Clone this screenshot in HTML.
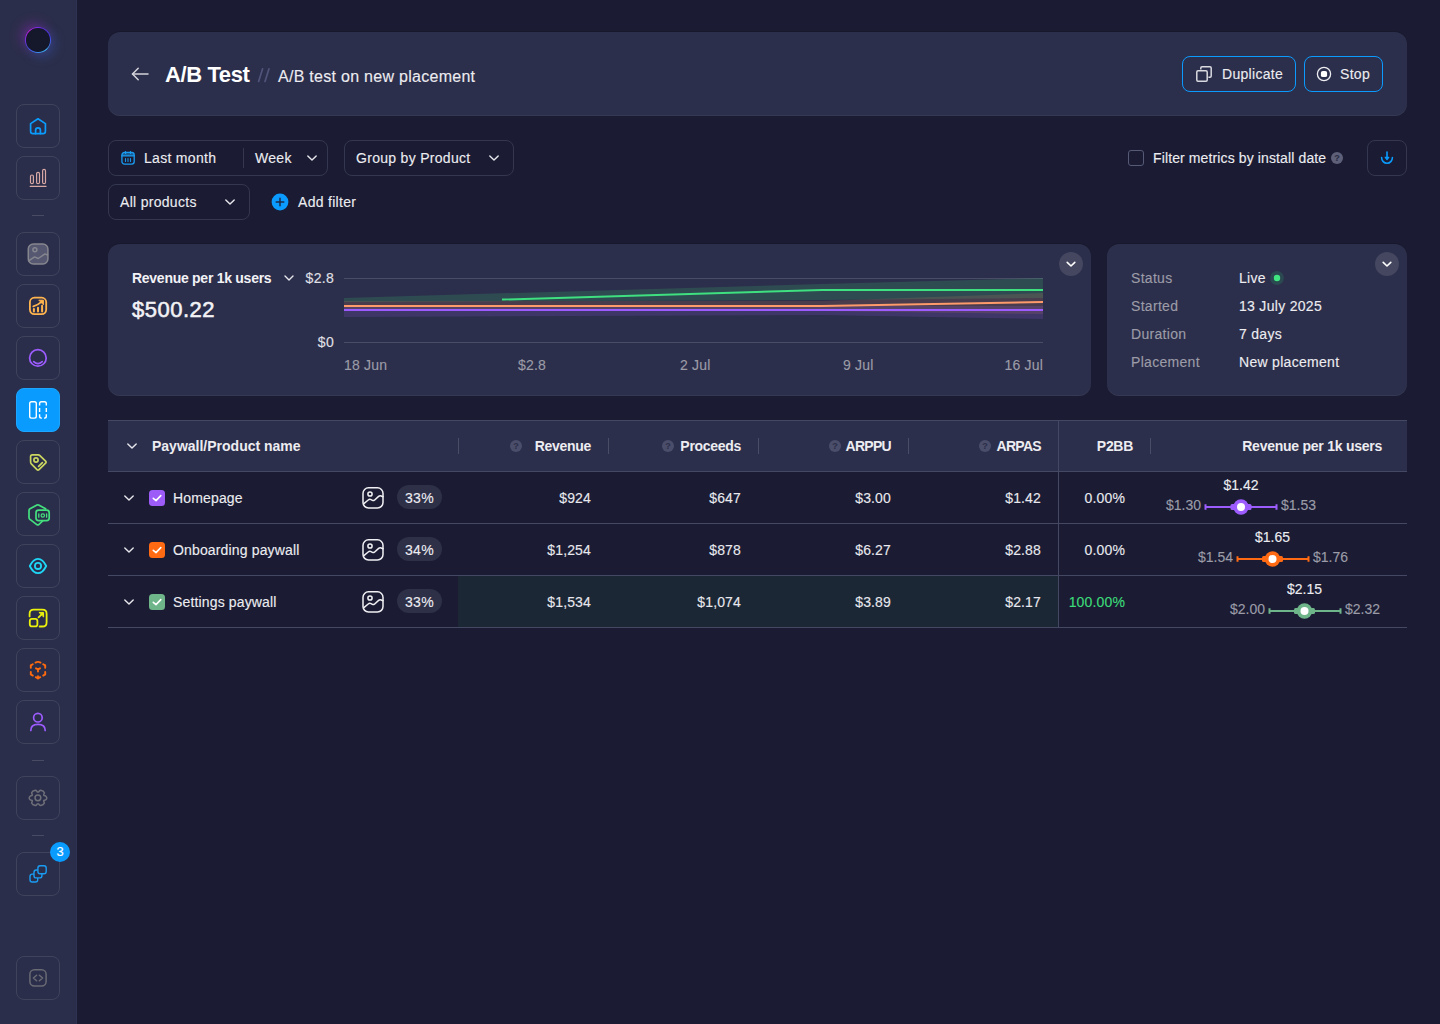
<!DOCTYPE html>
<html><head><meta charset="utf-8">
<style>
*{box-sizing:border-box;margin:0;padding:0}
html,body{width:1440px;height:1024px;overflow:hidden;background:#1b1c33;font-family:"Liberation Sans",sans-serif;color:#ececf1}
body div{-webkit-text-stroke:0.12px currentColor}
.hd,.b{-webkit-text-stroke:0 !important}
.abs{position:absolute}
#sb{position:absolute;left:0;top:0;width:77px;height:1024px;background:#2b2e4a;border-right:1px solid #2e3252}
.sbb{position:absolute;left:16px;width:44px;height:44px;border:1px solid #40435c;border-radius:8px}
.sbb svg{position:absolute;left:11px;top:11px;width:20px;height:20px}
.sep{position:absolute;left:32px;width:12px;height:1px;background:#484b63}
.card{position:absolute;background:#2c2f4b;border-radius:12px;box-shadow:inset 0 -1px 0 rgba(255,255,255,0.05),0 -1px 0 rgba(0,0,0,0.12)}
.t14{font-size:14px;line-height:16px;white-space:nowrap;letter-spacing:0.3px}
.box{position:absolute;border:1px solid #34374f;border-radius:8px;height:36px}
.btn{position:absolute;border:1px solid #0b9bff;border-radius:8px;height:36px}
.gray{color:#9c9ca8}
.hd{position:absolute;font-weight:bold;font-size:14px;line-height:16px;white-space:nowrap;letter-spacing:-0.3px}
.cell{position:absolute;font-size:14px;line-height:16px;white-space:nowrap}
.hline{position:absolute;left:108px;width:1299px;height:1px;background:#454862}
.vdiv{position:absolute;top:438px;width:1px;height:16px;background:#4a4d66}
.help{position:absolute;width:12px;height:12px;border-radius:50%;background:#4b4e6a}
</style></head>
<body>
<div id="sb">
<div class="abs" style="left:25px;top:27px;width:26px;height:26px;border-radius:50%;box-shadow:-4px -4px 12px rgba(170,40,210,0.35),4px 4px 12px rgba(60,110,230,0.3)"></div><div class="abs" style="left:25px;top:27px;width:26px;height:26px;border-radius:50%;background:conic-gradient(#7a2cf0 0deg,#4a3cf0 70deg,#3f6ff2 110deg,#42b8f6 140deg,#3a86f0 185deg,#4a4cec 230deg,#7a30e6 270deg,#d01ee8 315deg,#7a2cf0 360deg);"></div><div class="abs" style="left:26.4px;top:28.4px;width:23.2px;height:23.2px;border-radius:50%;background:#15172a"></div><div class="sbb" style="top:104px"></div><svg class="abs" style="left:24px;top:112px" width="28" height="28" viewBox="0 0 28 28"><g fill="none" stroke-linecap="round" stroke-linejoin="round" stroke="#0a9cff" stroke-width="1.7"><path d="M6.6 11.6 L14 6.8 L21.4 11.6 V19.2 Q21.4 21.6 19 21.6 H9 Q6.6 21.6 6.6 19.2 Z"/><path d="M11.6 21.6 V18.2 A2.4 2.4 0 0 1 16.4 18.2 V21.6"/></g></svg><div class="sbb" style="top:156px"></div><svg class="abs" style="left:24px;top:164px" width="28" height="28" viewBox="0 0 28 28"><g fill="none" stroke-linecap="round" stroke-linejoin="round" stroke="#d8a8a4" stroke-width="1.2"><rect x="6.5" y="11" width="2.9" height="8.6" rx="1.45"/><rect x="12.6" y="8.3" width="2.9" height="11.3" rx="1.45"/><rect x="18.6" y="5.4" width="2.9" height="14.2" rx="1.45"/><path d="M6.2 22.4 H22"/></g></svg><div class="sbb" style="top:232px"></div><svg class="abs" style="left:24px;top:240px" width="28" height="28" viewBox="0 0 28 28"><g fill="none" stroke-linecap="round" stroke-linejoin="round" stroke="#86868f" stroke-width="1.5"><rect x="4.3" y="4.1" width="19.6" height="19.8" rx="5" fill="#555870"/><circle cx="10.9" cy="9.8" r="2"/><path d="M4.6 20.8 L10.6 16.9 L14.2 18.5 L21 13.9 L23.6 15"/></g></svg><div class="sbb" style="top:284px"></div><svg class="abs" style="left:24px;top:292px" width="28" height="28" viewBox="0 0 28 28"><g fill="none" stroke-linecap="round" stroke-linejoin="round" stroke="#ffb44e" stroke-width="1.8"><rect x="5.9" y="5.7" width="16.3" height="16.4" rx="4.5"/><path d="M9.9 17 V19.4 M14 15.7 V19.4 M18.1 13.8 V19.4" stroke-width="2"/><path d="M9.3 14.4 Q14 13 18.2 9.4"/><path d="M15.2 8.2 H19.4 V12.4 Z" fill="#ffb44e" stroke-width="1"/></g></svg><div class="sbb" style="top:336px"></div><svg class="abs" style="left:24px;top:344px" width="28" height="28" viewBox="0 0 28 28"><g fill="none" stroke-linecap="round" stroke-linejoin="round" stroke="#9c5cff" stroke-width="1.7"><circle cx="13.9" cy="13.9" r="8.3"/><path d="M9.7 17.6 Q14 21.5 18.2 17.6"/></g></svg><div class="sbb" style="top:388px;background:#0a9bff;border-color:#1ea6ff"></div><svg class="abs" style="left:24px;top:396px" width="28" height="28" viewBox="0 0 28 28"><g fill="none" stroke-linecap="round" stroke-linejoin="round" stroke="#ffffff" stroke-width="1.4"><rect x="5.7" y="5.7" width="6.6" height="16.4" rx="1.8"/><path d="M15.6 9.6 V7.5 Q15.6 5.7 17.4 5.7 H20.5 Q22.3 5.7 22.3 7.5 V9.6 M15.6 11.9 V15.9 M22.3 11.9 V15.9 M15.6 18.2 V20.3 Q15.6 22.1 17.4 22.1 H17.9 M20 22.1 H20.5 Q22.3 22.1 22.3 20.3 V18.2" stroke-linecap="butt"/></g></svg><div class="sbb" style="top:440px"></div><svg class="abs" style="left:24px;top:448px" width="28" height="28" viewBox="0 0 28 28"><g fill="none" stroke-linecap="round" stroke-linejoin="round" stroke="#cad660" stroke-width="1.7"><path d="M6.6 13.8 V8.6 Q6.6 6.9 8.3 6.9 H14.2 Q15.2 6.9 15.9 7.6 L21.6 13.2 Q22.6 14.2 21.6 15.2 L15 21.6 Q14 22.6 13 21.6 L7.3 15.9 Q6.6 15.2 6.6 13.8 Z"/><circle cx="12" cy="12" r="2.1"/><path d="M14.6 18.4 L18.4 14.6"/></g></svg><div class="sbb" style="top:492px"></div><svg class="abs" style="left:24px;top:500px" width="28" height="28" viewBox="0 0 28 28"><g fill="none" stroke-linecap="round" stroke-linejoin="round" stroke="#44e07f" stroke-width="1.7"><path d="M21.6 8.8 L14.6 5 Q13.8 4.6 13 5 L6 8.8 Q5 9.4 5 10.6 V17.6 Q5 18.8 6 19.4 L12.8 24.6 Q13.8 25.3 14.8 24.6 L18.6 21"/><rect x="12" y="10.2" width="13.2" height="10.4" rx="2.6" fill="#2b2e4a"/><path d="M14.8 14 V17.2 M22.6 14 V17.2" stroke-width="1.3"/><circle cx="18.8" cy="15.5" r="1.7" stroke-width="1.2"/></g></svg><div class="sbb" style="top:544px"></div><svg class="abs" style="left:24px;top:552px" width="28" height="28" viewBox="0 0 28 28"><g fill="none" stroke-linecap="round" stroke-linejoin="round" stroke="#1ed7f7" stroke-width="1.8"><path d="M5.8 14 C8.2 9, 11 6.9, 14 6.9 C17 6.9, 19.8 9, 22.2 14 C19.8 19, 17 21.2, 14 21.2 C11 21.2, 8.2 19, 5.8 14 Z"/><circle cx="14" cy="13.9" r="3.1"/></g></svg><div class="sbb" style="top:596px"></div><svg class="abs" style="left:24px;top:604px" width="28" height="28" viewBox="0 0 28 28"><g fill="none" stroke-linecap="round" stroke-linejoin="round" stroke="#eaf20c" stroke-width="1.8"><path d="M5.6 12.4 V9.8 Q5.6 5.7 9.7 5.7 H18.4 Q22.6 5.7 22.6 9.8 V18.4 Q22.6 22.5 18.4 22.5 H15.6"/><rect x="5.8" y="14.8" width="7.6" height="7.6" rx="2.2"/><path d="M14.6 13.4 L18.4 9.6"/><path d="M15.3 8.4 H19.6 V12.6 Z" fill="#eaf20c" stroke-width="1"/></g></svg><div class="sbb" style="top:648px"></div><svg class="abs" style="left:24px;top:656px" width="28" height="28" viewBox="0 0 28 28"><g fill="none" stroke-linecap="round" stroke-linejoin="round" stroke="#ff6a0e" stroke-width="1.9"><path d="M11.5 6.6 Q14 5.2 16.5 6.6"/><path d="M8.8 8.2 L6.8 9.4 V11.8"/><path d="M19.2 8.2 L21.2 9.4 V11.8"/><path d="M6.8 16 V18.4 L8.8 19.6"/><path d="M21.2 16 V18.4 L19.2 19.6"/><path d="M11.8 21.2 L14 22.4 L16.2 21.2"/><path d="M14 22.4 V20.2"/><path d="M12 12.3 L14 13.4 L16 12.3 M14 13.4 V15.6"/></g></svg><div class="sbb" style="top:700px"></div><svg class="abs" style="left:24px;top:708px" width="28" height="28" viewBox="0 0 28 28"><g fill="none" stroke-linecap="round" stroke-linejoin="round" stroke="#9c5cff" stroke-width="1.7"><circle cx="13.9" cy="9.7" r="4.3"/><path d="M6.8 22.4 Q6.8 16.4 14 16.4 Q21.2 16.4 21.2 22.4"/></g></svg><div class="sbb" style="top:776px"></div><svg class="abs" style="left:24px;top:784px" width="28" height="28" viewBox="0 0 28 28"><g fill="none" stroke-linecap="round" stroke-linejoin="round" stroke="#6e6f79" stroke-width="1.5"><path d="M11.3 6.2 Q12.6 6.4 13 7.6 Q14 8.6 15 7.6 Q15.4 6.4 16.7 6.2 Q19.6 6.8 20.4 8.8 Q19.8 10.6 19.6 11 Q20 12 21.4 11.8 Q22.8 12.6 22.8 13.9 Q22.8 15.3 21.4 16 Q20 16 19.6 16.8 Q19.8 17.6 20.4 19 Q19.6 21 16.7 21.6 Q15.4 21.4 15 20.2 Q14 19.2 13 20.2 Q12.6 21.4 11.3 21.6 Q8.4 21 7.6 19 Q8.2 17.6 8.4 16.8 Q8 16 6.6 16 Q5.2 15.3 5.2 13.9 Q5.2 12.6 6.6 11.8 Q8 12 8.4 11 Q8.2 10.6 7.6 8.8 Q8.4 6.8 11.3 6.2 Z"/><circle cx="13.9" cy="13.8" r="2.9"/></g></svg><div class="sbb" style="top:852px"></div><svg class="abs" style="left:24px;top:860px" width="28" height="28" viewBox="0 0 28 28"><g fill="none" stroke-linecap="round" stroke-linejoin="round" stroke="#1a9cf2" stroke-width="1.4"><rect x="6" y="14.1" width="7.7" height="7.9" rx="2.2" fill="#2b2e4a"/><rect x="10" y="10" width="7.9" height="7.9" rx="2.2" fill="#2b2e4a"/><rect x="13.9" y="5.7" width="8.3" height="8" rx="2.2" fill="#2b2e4a"/></g></svg><div class="sbb" style="top:956px"></div><svg class="abs" style="left:24px;top:964px" width="28" height="28" viewBox="0 0 28 28"><g fill="none" stroke-linecap="round" stroke-linejoin="round" stroke="#696a74" stroke-width="1.5"><rect x="5.9" y="5.7" width="16.2" height="16.4" rx="4.5"/><path d="M12.6 11.2 L9.4 14 L12.6 16.7 M15.4 11.2 L18.6 14 L15.4 16.7"/></g></svg><div class="sep" style="top:215px"></div><div class="sep" style="top:760px"></div><div class="sep" style="top:835px"></div><div class="abs" style="left:50px;top:842px;width:20px;height:20px;border-radius:50%;background:#0a9bff;color:#fff;font-size:13px;line-height:20px;text-align:center">3</div>
</div>

<!-- header card -->
<div class="card" style="left:108px;top:32px;width:1299px;height:84px"></div>


<!-- header content -->
<svg class="abs" style="left:130px;top:66px" width="20" height="16" viewBox="0 0 20 16"><g fill="none" stroke="#d4d4dc" stroke-width="1.5" stroke-linecap="round" stroke-linejoin="round"><path d="M2.5 8 H18"/><path d="M8.2 2.3 L2.5 8 L8.2 13.7"/></g></svg>
<div class="abs" style="left:165px;top:63px;font-size:22px;line-height:24px;font-weight:bold;color:#fff;white-space:nowrap;letter-spacing:-0.4px;-webkit-text-stroke:0">A/B Test</div>
<svg class="abs" style="left:254px;top:64px" width="20" height="22" viewBox="254 64 20 22"><path d="M258.6 81.4 L262.6 68.8 M265 81.4 L269 68.8" stroke="#50547a" stroke-width="1.7" stroke-linecap="round"/></svg>
<div class="abs" style="left:278px;top:68px;font-size:16px;line-height:18px;letter-spacing:0.28px;color:#ececf1;white-space:nowrap">A/B test on new placement</div>
<div class="btn" style="left:1182px;top:56px;width:114px"></div>
<svg class="abs" style="left:1194px;top:64px" width="20" height="20" viewBox="0 0 20 20"><g fill="none" stroke="#d9d9e0" stroke-width="1.5" stroke-linejoin="round"><path d="M6.8 5.6 V4 Q6.8 2.8 8 2.8 H16 Q17.2 2.8 17.2 4 V12 Q17.2 13.2 16 13.2 H14.4"/><rect x="2.8" y="6.8" width="10.4" height="10.4" rx="1.2"/></g></svg>
<div class="t14 abs" style="left:1222px;top:66px;color:#ececf1">Duplicate</div>
<div class="btn" style="left:1304px;top:56px;width:79px"></div>
<svg class="abs" style="left:1314px;top:64px" width="20" height="20" viewBox="0 0 20 20"><circle cx="10" cy="10" r="6.6" fill="none" stroke="#ececf1" stroke-width="1.3"/><rect x="6.9" y="6.9" width="6.2" height="6.2" rx="1.9" fill="#fff"/></svg>
<div class="t14 abs" style="left:1340px;top:66px;color:#ececf1">Stop</div>

<!-- filters -->
<div class="box" style="left:108px;top:140px;width:220px"></div>
<div class="box" style="left:344px;top:140px;width:170px"></div>
<div class="box" style="left:108px;top:184px;width:142px"></div>
<div class="box" style="left:1367px;top:140px;width:40px"></div>
<svg class="abs" style="left:120px;top:150px" width="16" height="16" viewBox="0 0 16 16"><path d="M1.9 5.8 V5 Q1.9 2.4 4.5 2.4 H11.6 Q14.2 2.4 14.2 5 V5.8 Z" fill="#1a93e6" fill-opacity="0.55"/><g fill="none" stroke="#1a9cf2" stroke-width="1.3" stroke-linecap="round"><rect x="1.9" y="2.4" width="12.3" height="11.7" rx="2.6"/><path d="M1.9 5.8 H14.2"/><path d="M5.5 1.7 V3.4 M10.5 1.7 V3.4"/></g><g stroke="#1a93e6" stroke-width="1.1" stroke-linecap="round"><path d="M5.5 8.6 V11.4 M8 8.6 V11.4 M10.5 8.6 V11.4"/></g></svg>
<div class="t14 abs" style="left:144px;top:150px">Last month</div>
<div class="abs" style="left:243px;top:148px;width:1px;height:20px;background:#34374f"></div>
<div class="t14 abs" style="left:255px;top:150px">Week</div>
<svg class="abs" style="left:305px;top:151px" width="14" height="14" viewBox="0 0 14 14"><path d="M2.8 4.9 L7 9.1 L11.2 4.9" fill="none" stroke="#e6e6ec" stroke-width="1.4" stroke-linecap="round" stroke-linejoin="round"/></svg>
<div class="t14 abs" style="left:356px;top:150px">Group by Product</div>
<svg class="abs" style="left:487px;top:151px" width="14" height="14" viewBox="0 0 14 14"><path d="M2.8 4.9 L7 9.1 L11.2 4.9" fill="none" stroke="#e6e6ec" stroke-width="1.4" stroke-linecap="round" stroke-linejoin="round"/></svg>
<div class="t14 abs" style="left:120px;top:194px">All products</div>
<svg class="abs" style="left:223px;top:195px" width="14" height="14" viewBox="0 0 14 14"><path d="M2.8 4.9 L7 9.1 L11.2 4.9" fill="none" stroke="#e6e6ec" stroke-width="1.4" stroke-linecap="round" stroke-linejoin="round"/></svg>
<svg class="abs" style="left:271px;top:193px" width="18" height="18" viewBox="0 0 18 18"><circle cx="9" cy="9" r="8.4" fill="#0b9bff"/><path d="M9 5.2 V12.8 M5.2 9 H12.8" stroke="#1b2a4a" stroke-width="1.5" stroke-linecap="round"/></svg>
<div class="t14 abs" style="left:298px;top:194px">Add filter</div>
<div class="abs" style="left:1128px;top:150px;width:16px;height:16px;border:1px solid #565a76;border-radius:3px"></div>
<div class="t14 abs" style="left:1153px;top:150px;letter-spacing:0.12px">Filter metrics by install date</div>
<div class="help" style="left:1331px;top:152px;background:#5d6078"></div>
<div class="abs" style="left:1331px;top:152px;width:12px;height:12px;font-size:9px;line-height:12px;font-weight:bold;text-align:center;color:#2a2c44">?</div>
<svg class="abs" style="left:1379px;top:150px" width="16" height="16" viewBox="0 0 16 16"><g fill="none" stroke="#0a9cff" stroke-width="1.6" stroke-linecap="round" stroke-linejoin="round"><path d="M8 2.1 V7.6"/><path d="M6.2 7.3 L9.8 7.3 L8 9.6 Z" fill="#0a9cff" stroke-width="1.2"/><path d="M2.6 7.6 A5.4 5.7 0 0 0 13.4 7.6"/></g></svg>


<!-- chart card -->
<div class="card" style="left:108px;top:244px;width:983px;height:152px"></div>
<div class="card" style="left:1107px;top:244px;width:300px;height:152px"></div>


<!-- chart content -->
<div class="abs" style="left:132px;top:270px;font-size:14px;line-height:16px;font-weight:bold;color:#f2f2f6;white-space:nowrap;letter-spacing:-0.27px;-webkit-text-stroke:0">Revenue per 1k users</div>
<svg class="abs" style="left:282px;top:271px" width="14" height="14" viewBox="0 0 14 14"><path d="M3 5 L7 9 L11 5" fill="none" stroke="#e6e6ec" stroke-width="1.4" stroke-linecap="round" stroke-linejoin="round"/></svg>
<div class="abs" style="left:132px;top:297px;font-size:22px;line-height:24px;font-weight:normal;color:#f2f2f6;white-space:nowrap;letter-spacing:0.5px;padding-top:1px;-webkit-text-stroke:0.55px #f2f2f6">$500.22</div>
<div class="t14 abs" style="left:300px;width:34px;text-align:right;top:270px;color:#e0e0e8">$2.8</div>
<div class="t14 abs" style="left:300px;width:34px;text-align:right;top:334px;color:#e0e0e8">$0</div>
<div class="abs" style="left:344px;top:278px;width:699px;height:1px;background:#4a4d66"></div>
<div class="abs" style="left:344px;top:342px;width:699px;height:1px;background:#4a4d66"></div>
<svg class="abs" style="left:344px;top:270px" width="700" height="60" viewBox="344 270 700 60">
  <path d="M343 298 L822 284 L1043 278 L1043 298 L822 300 L343 302 Z" fill="#3fe07f" fill-opacity="0.16"/>
  <path d="M344 301 L822 301 L1043 293 L1043 314 L822 311 L344 311 Z" fill="#ff8c5a" fill-opacity="0.14"/>
  <path d="M344 305 L822 306 L1043 306 L1043 319 L822 315 L344 317 Z" fill="#9c5cff" fill-opacity="0.16"/>
  <path d="M502 299.6 L822 290 L1043 290" fill="none" stroke="#3fe07f" stroke-width="2"/>
  <path d="M343 306 L822 306 L1043 302" fill="none" stroke="#ff9a6a" stroke-width="2"/>
  <path d="M343 310 L1043 310" fill="none" stroke="#9c5cff" stroke-width="2"/>
</svg>
<div class="abs" style="left:344px;top:357px;font-size:14px;line-height:16px;color:#9c9ca8;white-space:nowrap;letter-spacing:0.2px">18 Jun</div>
<div class="abs" style="left:518px;top:357px;font-size:14px;line-height:16px;color:#9c9ca8;white-space:nowrap;letter-spacing:0.2px">$2.8</div>
<div class="abs" style="left:680px;top:357px;font-size:14px;line-height:16px;color:#9c9ca8;white-space:nowrap;letter-spacing:0.2px">2 Jul</div>
<div class="abs" style="left:843px;top:357px;font-size:14px;line-height:16px;color:#9c9ca8;white-space:nowrap;letter-spacing:0.2px">9 Jul</div>
<div class="abs" style="left:943px;width:100px;text-align:right;top:357px;font-size:14px;line-height:16px;color:#9c9ca8;white-space:nowrap;letter-spacing:0.2px">16 Jul</div>
<div class="abs" style="left:1059px;top:252px;width:24px;height:24px;border-radius:50%;background:#44475f"></div>
<svg class="abs" style="left:1064px;top:257px" width="14" height="14" viewBox="0 0 14 14"><path d="M3.2 5.4 L7 9 L10.8 5.4" fill="none" stroke="#fff" stroke-width="1.6" stroke-linecap="round" stroke-linejoin="round"/></svg>

<!-- status content -->
<div class="t14 abs gray" style="left:1131px;top:270px">Status</div>
<div class="t14 abs gray" style="left:1131px;top:298px">Started</div>
<div class="t14 abs gray" style="left:1131px;top:326px">Duration</div>
<div class="t14 abs gray" style="left:1131px;top:354px">Placement</div>
<div class="t14 abs" style="left:1239px;top:270px">Live</div>
<svg class="abs" style="left:1270px;top:271px" width="14" height="14" viewBox="0 0 14 14"><circle cx="7" cy="7" r="6.9" fill="#2b4950"/><circle cx="7" cy="7" r="3.2" fill="#40e680"/></svg>
<div class="t14 abs" style="left:1239px;top:298px">13 July 2025</div>
<div class="t14 abs" style="left:1239px;top:326px">7 days</div>
<div class="t14 abs" style="left:1239px;top:354px">New placement</div>
<div class="abs" style="left:1375px;top:252px;width:24px;height:24px;border-radius:50%;background:#44475f"></div>
<svg class="abs" style="left:1380px;top:257px" width="14" height="14" viewBox="0 0 14 14"><path d="M3.2 5.4 L7 9 L10.8 5.4" fill="none" stroke="#fff" stroke-width="1.6" stroke-linecap="round" stroke-linejoin="round"/></svg>

<!-- table -->
<div class="abs" style="left:108px;top:420px;width:1299px;height:51px;background:#2c2f4b"></div>
<div class="abs" style="left:458px;top:576px;width:600px;height:51px;background:#1c2736"></div>
<div class="hline" style="top:420px"></div>
<div class="hline" style="top:471px"></div>
<div class="hline" style="top:523px"></div>
<div class="hline" style="top:575px"></div>
<div class="hline" style="top:627px"></div>
<div class="abs" style="left:1058px;top:420px;width:1px;height:208px;background:#454862"></div>
<div class="vdiv" style="left:458px"></div>
<div class="vdiv" style="left:608px"></div>
<div class="vdiv" style="left:758px"></div>
<div class="vdiv" style="left:908px"></div>
<div class="vdiv" style="left:1150px"></div>
<svg class="abs" style="left:125px;top:439px" width="14" height="14" viewBox="0 0 14 14"><path d="M2.8 4.9 L7 9.1 L11.2 4.9" fill="none" stroke="#e6e6ec" stroke-width="1.4" stroke-linecap="round" stroke-linejoin="round"/></svg>
<div class="hd" style="left:152px;top:438px;letter-spacing:0px">Paywall/Product name</div>
<div class="hd" style="left:441px;width:150px;text-align:right;top:438px;letter-spacing:-0.3px">Revenue</div>
<div class="help" style="left:510px;top:440px"></div><div class="abs" style="left:510px;top:440px;width:12px;height:12px;font-size:9px;line-height:12px;font-weight:bold;text-align:center;color:#2c2f4b">?</div>
<div class="hd" style="left:591px;width:150px;text-align:right;top:438px;letter-spacing:-0.3px">Proceeds</div>
<div class="help" style="left:662px;top:440px"></div><div class="abs" style="left:662px;top:440px;width:12px;height:12px;font-size:9px;line-height:12px;font-weight:bold;text-align:center;color:#2c2f4b">?</div>
<div class="hd" style="left:741px;width:150px;text-align:right;top:438px;letter-spacing:-0.7px">ARPPU</div>
<div class="help" style="left:829px;top:440px"></div><div class="abs" style="left:829px;top:440px;width:12px;height:12px;font-size:9px;line-height:12px;font-weight:bold;text-align:center;color:#2c2f4b">?</div>
<div class="hd" style="left:891px;width:150px;text-align:right;top:438px;letter-spacing:-0.7px">ARPAS</div>
<div class="help" style="left:979px;top:440px"></div><div class="abs" style="left:979px;top:440px;width:12px;height:12px;font-size:9px;line-height:12px;font-weight:bold;text-align:center;color:#2c2f4b">?</div>
<div class="hd" style="left:983px;width:150px;text-align:right;top:438px">P2BB</div>
<div class="hd" style="left:1232px;width:150px;text-align:right;top:438px;letter-spacing:-0.25px">Revenue per 1k users</div>
<svg class="abs" style="left:121.5px;top:491px" width="14" height="14" viewBox="0 0 14 14"><path d="M2.8 4.9 L7 9.1 L11.2 4.9" fill="none" stroke="#e6e6ec" stroke-width="1.4" stroke-linecap="round" stroke-linejoin="round"/></svg>
<div class="abs" style="left:149px;top:490px;width:16px;height:16px;border-radius:3.5px;background:#9d5cf8"></div>
<svg class="abs" style="left:149px;top:490px" width="16" height="16" viewBox="0 0 16 16"><path d="M4.3 8.3 L7 10.6 L11.8 5.6" fill="none" stroke="#fff" stroke-width="1.6" stroke-linecap="round" stroke-linejoin="round"/></svg>
<div class="cell" style="left:173px;top:490px;letter-spacing:0.15px">Homepage</div>
<svg class="abs" style="left:361px;top:485px" width="24" height="24" viewBox="0 0 24 24"><g fill="none" stroke="#f0f0f4" stroke-width="1.5" stroke-linecap="round" stroke-linejoin="round"><rect x="2" y="2.8" width="20" height="20.2" rx="5.5"/><circle cx="9" cy="9" r="2.1"/><path d="M2.6 18.8 L7.2 15 Q8.6 13.9 10 14.6 L11.4 15.4 Q12.4 15.9 13.4 15.2 L17.6 11.4 Q18.8 10.4 20.2 11 L22 11.8"/></g></svg>
<div class="abs" style="left:397px;top:485px;width:45px;height:24px;border-radius:12px;background:#2e3048"></div>
<div class="cell" style="left:397px;width:45px;text-align:center;top:490px;letter-spacing:0.3px">33%</div>
<div class="cell" style="left:441px;width:150px;text-align:right;top:490px;color:#e8e8ee;letter-spacing:0.15px">$924</div>
<div class="cell" style="left:591px;width:150px;text-align:right;top:490px;color:#e8e8ee;letter-spacing:0.15px">$647</div>
<div class="cell" style="left:741px;width:150px;text-align:right;top:490px;color:#e8e8ee;letter-spacing:0.15px">$3.00</div>
<div class="cell" style="left:891px;width:150px;text-align:right;top:490px;color:#e8e8ee;letter-spacing:0.15px">$1.42</div>
<div class="cell" style="left:975px;width:150px;text-align:right;top:490px;color:#e8e8ee;letter-spacing:0.15px">0.00%</div>
<svg class="abs" style="left:121.5px;top:543px" width="14" height="14" viewBox="0 0 14 14"><path d="M2.8 4.9 L7 9.1 L11.2 4.9" fill="none" stroke="#e6e6ec" stroke-width="1.4" stroke-linecap="round" stroke-linejoin="round"/></svg>
<div class="abs" style="left:149px;top:542px;width:16px;height:16px;border-radius:3.5px;background:#ff6a13"></div>
<svg class="abs" style="left:149px;top:542px" width="16" height="16" viewBox="0 0 16 16"><path d="M4.3 8.3 L7 10.6 L11.8 5.6" fill="none" stroke="#fff" stroke-width="1.6" stroke-linecap="round" stroke-linejoin="round"/></svg>
<div class="cell" style="left:173px;top:542px;letter-spacing:0.15px">Onboarding paywall</div>
<svg class="abs" style="left:361px;top:537px" width="24" height="24" viewBox="0 0 24 24"><g fill="none" stroke="#f0f0f4" stroke-width="1.5" stroke-linecap="round" stroke-linejoin="round"><rect x="2" y="2.8" width="20" height="20.2" rx="5.5"/><circle cx="9" cy="9" r="2.1"/><path d="M2.6 18.8 L7.2 15 Q8.6 13.9 10 14.6 L11.4 15.4 Q12.4 15.9 13.4 15.2 L17.6 11.4 Q18.8 10.4 20.2 11 L22 11.8"/></g></svg>
<div class="abs" style="left:397px;top:537px;width:45px;height:24px;border-radius:12px;background:#2e3048"></div>
<div class="cell" style="left:397px;width:45px;text-align:center;top:542px;letter-spacing:0.3px">34%</div>
<div class="cell" style="left:441px;width:150px;text-align:right;top:542px;color:#e8e8ee;letter-spacing:0.15px">$1,254</div>
<div class="cell" style="left:591px;width:150px;text-align:right;top:542px;color:#e8e8ee;letter-spacing:0.15px">$878</div>
<div class="cell" style="left:741px;width:150px;text-align:right;top:542px;color:#e8e8ee;letter-spacing:0.15px">$6.27</div>
<div class="cell" style="left:891px;width:150px;text-align:right;top:542px;color:#e8e8ee;letter-spacing:0.15px">$2.88</div>
<div class="cell" style="left:975px;width:150px;text-align:right;top:542px;color:#e8e8ee;letter-spacing:0.15px">0.00%</div>
<svg class="abs" style="left:121.5px;top:595px" width="14" height="14" viewBox="0 0 14 14"><path d="M2.8 4.9 L7 9.1 L11.2 4.9" fill="none" stroke="#e6e6ec" stroke-width="1.4" stroke-linecap="round" stroke-linejoin="round"/></svg>
<div class="abs" style="left:149px;top:594px;width:16px;height:16px;border-radius:3.5px;background:#6fb58a"></div>
<svg class="abs" style="left:149px;top:594px" width="16" height="16" viewBox="0 0 16 16"><path d="M4.3 8.3 L7 10.6 L11.8 5.6" fill="none" stroke="#fff" stroke-width="1.6" stroke-linecap="round" stroke-linejoin="round"/></svg>
<div class="cell" style="left:173px;top:594px;letter-spacing:0.15px">Settings paywall</div>
<svg class="abs" style="left:361px;top:589px" width="24" height="24" viewBox="0 0 24 24"><g fill="none" stroke="#f0f0f4" stroke-width="1.5" stroke-linecap="round" stroke-linejoin="round"><rect x="2" y="2.8" width="20" height="20.2" rx="5.5"/><circle cx="9" cy="9" r="2.1"/><path d="M2.6 18.8 L7.2 15 Q8.6 13.9 10 14.6 L11.4 15.4 Q12.4 15.9 13.4 15.2 L17.6 11.4 Q18.8 10.4 20.2 11 L22 11.8"/></g></svg>
<div class="abs" style="left:397px;top:589px;width:45px;height:24px;border-radius:12px;background:#2e3048"></div>
<div class="cell" style="left:397px;width:45px;text-align:center;top:594px;letter-spacing:0.3px">33%</div>
<div class="cell" style="left:441px;width:150px;text-align:right;top:594px;color:#e8e8ee;letter-spacing:0.15px">$1,534</div>
<div class="cell" style="left:591px;width:150px;text-align:right;top:594px;color:#e8e8ee;letter-spacing:0.15px">$1,074</div>
<div class="cell" style="left:741px;width:150px;text-align:right;top:594px;color:#e8e8ee;letter-spacing:0.15px">$3.89</div>
<div class="cell" style="left:891px;width:150px;text-align:right;top:594px;color:#e8e8ee;letter-spacing:0.15px">$2.17</div>
<div class="cell" style="left:975px;width:150px;text-align:right;top:594px;color:#3ddc7a;letter-spacing:0.15px">100.00%</div>
<div class="abs" style="left:1201px;width:80px;text-align:center;top:477px;font-size:14px;line-height:16px;color:#ececf1;white-space:nowrap">$1.42</div><div class="abs" style="left:1121px;width:80px;text-align:right;top:497px;font-size:14px;line-height:16px;color:#9c9ca8;white-space:nowrap">$1.30</div><div class="abs" style="left:1281px;top:497px;font-size:14px;line-height:16px;color:#9c9ca8;white-space:nowrap">$1.53</div><svg class="abs" style="left:1203px;top:498px" width="76" height="18" viewBox="1203 498 76 18"><path d="M1205 507 H1277" stroke="#9c5cff" stroke-width="2.2"/><path d="M1205.5 504.2 V509.8 M1276.5 504.2 V509.8" stroke="#9c5cff" stroke-width="2"/><rect x="1230.5" y="504" width="21" height="6" rx="1.5" fill="#9c5cff"/><circle cx="1241" cy="507" r="7.7" fill="#9c5cff"/><circle cx="1241" cy="507" r="4" fill="#fff"/></svg>
<div class="abs" style="left:1232.5px;width:80px;text-align:center;top:529px;font-size:14px;line-height:16px;color:#ececf1;white-space:nowrap">$1.65</div><div class="abs" style="left:1153px;width:80px;text-align:right;top:549px;font-size:14px;line-height:16px;color:#9c9ca8;white-space:nowrap">$1.54</div><div class="abs" style="left:1313px;top:549px;font-size:14px;line-height:16px;color:#9c9ca8;white-space:nowrap">$1.76</div><svg class="abs" style="left:1235px;top:550px" width="76" height="18" viewBox="1235 550 76 18"><path d="M1237 559 H1309" stroke="#ff6a13" stroke-width="2.2"/><path d="M1237.5 556.2 V561.8 M1308.5 556.2 V561.8" stroke="#ff6a13" stroke-width="2"/><rect x="1262.0" y="556" width="21" height="6" rx="1.5" fill="#ff6a13"/><circle cx="1272.5" cy="559" r="7.7" fill="#ff6a13"/><circle cx="1272.5" cy="559" r="4" fill="#fff"/></svg>
<div class="abs" style="left:1264.5px;width:80px;text-align:center;top:581px;font-size:14px;line-height:16px;color:#ececf1;white-space:nowrap">$2.15</div><div class="abs" style="left:1185px;width:80px;text-align:right;top:601px;font-size:14px;line-height:16px;color:#9c9ca8;white-space:nowrap">$2.00</div><div class="abs" style="left:1345px;top:601px;font-size:14px;line-height:16px;color:#9c9ca8;white-space:nowrap">$2.32</div><svg class="abs" style="left:1267px;top:602px" width="76" height="18" viewBox="1267 602 76 18"><path d="M1269 611 H1341" stroke="#6fb58a" stroke-width="2.2"/><path d="M1269.5 608.2 V613.8 M1340.5 608.2 V613.8" stroke="#6fb58a" stroke-width="2"/><rect x="1294.0" y="608" width="21" height="6" rx="1.5" fill="#6fb58a"/><circle cx="1304.5" cy="611" r="7.7" fill="#6fb58a"/><circle cx="1304.5" cy="611" r="4" fill="#fff"/></svg>
</body></html>
